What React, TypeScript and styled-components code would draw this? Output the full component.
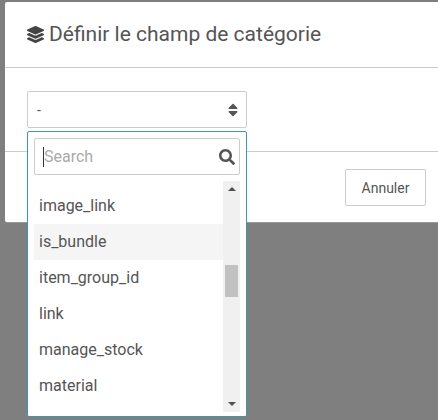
import styled, { createGlobalStyle } from 'styled-components'
import { FaLayerGroup, FaSearch, FaSort } from 'react-icons/fa'

const options = ['image_link', 'is_bundle', 'item_group_id', 'link', 'manage_stock', 'material']

const GlobalStyle = createGlobalStyle`
  html, body {
    margin: 0;
    padding: 0;
    background: #7f7f7f;
    font-family: Roboto, "Liberation Sans", sans-serif;
    color: #555;
  }
`

export default function App() {
  return (
    <>
      <GlobalStyle />
      <Page>
        <Modal>
          <Header>
            <TitleIcon />
            <Title>Définir le champ de catégorie</Title>
          </Header>
          <Body>
            <SelectWrap>
              <Select>
                <span>-</span>
                <SortIcon />
              </Select>
              <Dropdown>
                <SearchBox>
                  <Caret />
                  <Placeholder>Search</Placeholder>
                  <SearchIcon />
                </SearchBox>
                <ListArea>
                  <List>
                    {options.map(o => (
                      <Option key={o} $hover={o === 'is_bundle'}>{o}</Option>
                    ))}
                  </List>
                  <Scrollbar>
                    <Arrow $dir="up" />
                    <Track>
                      <Thumb />
                    </Track>
                    <Arrow $dir="down" />
                  </Scrollbar>
                </ListArea>
              </Dropdown>
            </SelectWrap>
          </Body>
          <Footer>
            <CancelButton>Annuler</CancelButton>
          </Footer>
        </Modal>
      </Page>
    </>
  )
}

const Page = styled.div({
  height: 420,
  width: 438,
  overflow: 'hidden',
  paddingTop: 2,
  paddingLeft: 5,
  boxSizing: 'border-box',
})

const Modal = styled.div({
  width: 460,
  backgroundColor: '#fff',
  boxShadow: '0 1px 0 #9a9a9a',
  borderRadius: 2,
})

const Header = styled.div({
  height: 66,
  boxSizing: 'border-box',
  borderBottom: '1px solid #ccc',
  display: 'flex',
  alignItems: 'center',
  paddingLeft: 22,
  paddingBottom: 2,
  gap: 5,
})

const TitleIcon = styled(FaLayerGroup)({
  width: 17,
  height: 17,
  color: '#444',
  marginTop: 2,
})

const Title = styled.h4({
  margin: 0,
  fontSize: 21,
  fontWeight: 400,
  color: '#555',
})

const Body = styled.div({
  padding: '23px 22px',
  borderBottom: '1px solid #ccc',
})

const SelectWrap = styled.div({
  position: 'relative',
  width: 220,
})

const Select = styled.div({
  height: 37,
  boxSizing: 'border-box',
  border: '1px solid #ccc',
  borderRadius: 2,
  display: 'flex',
  alignItems: 'center',
  justifyContent: 'space-between',
  padding: '0 6px 0 9px',
  fontSize: 14,
})

const SortIcon = styled(FaSort)({
  width: 14,
  height: 16,
  color: '#555',
})

const Dropdown = styled.div({
  position: 'absolute',
  top: 40,
  left: 0,
  width: 220,
  height: 286,
  boxSizing: 'border-box',
  backgroundColor: '#fff',
  border: '1px solid #3c98b0',
  borderRadius: 2,
  padding: 6,
})

const SearchBox = styled.div({
  height: 37,
  boxSizing: 'border-box',
  border: '1px solid #ccc',
  borderRadius: 2,
  display: 'flex',
  alignItems: 'center',
  paddingLeft: 8,
  paddingRight: 4,
})

const Caret = styled.span({
  width: 1,
  height: 20,
  backgroundColor: '#333',
})

const Placeholder = styled.span({
  flex: 1,
  fontSize: 16,
  color: '#aaa',
})

const SearchIcon = styled(FaSearch)({
  width: 16,
  height: 16,
  color: '#555',
})

const ListArea = styled.div({
  display: 'flex',
  marginTop: 6,
  height: 231,
})

const List = styled.div({
  flex: 1,
  paddingTop: 7,
  overflow: 'hidden',
})

const Option = styled.div<{ $hover?: boolean }>(({ $hover }) => ({
  height: 36,
  lineHeight: '36px',
  paddingLeft: 5,
  fontSize: 16,
  color: '#555',
  backgroundColor: $hover ? '#f5f5f5' : 'transparent',
}))

const Scrollbar = styled.div({
  width: 17,
  backgroundColor: '#f0f0f0',
  display: 'flex',
  flexDirection: 'column',
  alignItems: 'center',
})

const Arrow = styled.div<{ $dir: 'up' | 'down' }>(({ $dir }) => ({
  width: 0,
  height: 0,
  margin: '6px 0',
  borderLeft: '4px solid transparent',
  borderRight: '4px solid transparent',
  borderBottom: $dir === 'up' ? '4px solid #505050' : undefined,
  borderTop: $dir === 'down' ? '4px solid #505050' : undefined,
}))

const Track = styled.div({
  flex: 1,
  width: '100%',
  display: 'flex',
  justifyContent: 'center',
})

const Thumb = styled.div({
  width: 13,
  height: 32,
  marginTop: 68,
  backgroundColor: '#c1c1c1',
})

const Footer = styled.div({
  display: 'flex',
  justifyContent: 'flex-end',
  padding: '17px 39px 16px 0',
})

const CancelButton = styled.button({
  width: 81,
  height: 37,
  backgroundColor: '#fff',
  border: '1px solid #ccc',
  borderRadius: 2,
  fontFamily: 'inherit',
  fontSize: 14,
  color: '#555',
  padding: 0,
})
